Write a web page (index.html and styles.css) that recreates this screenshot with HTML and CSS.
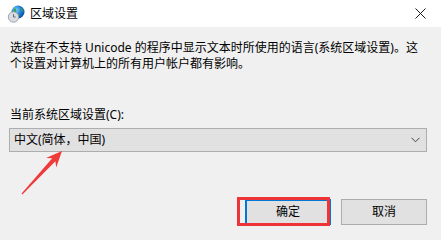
FILE: index.html
```html
<!DOCTYPE html>
<html lang="zh-CN">
<head>
<meta charset="utf-8">
<title>区域设置</title>
<link rel="stylesheet" href="styles.css">
</head>
<body>
<div class="window">
  <div class="titlebar">
    <svg class="app-icon" width="18" height="18" viewBox="0 0 18 18">
      <defs>
        <radialGradient id="g" cx="0.35" cy="0.35" r="0.7">
          <stop offset="0" stop-color="#7fd0ff"/>
          <stop offset="0.6" stop-color="#1a7ad4"/>
          <stop offset="1" stop-color="#0b4f9a"/>
        </radialGradient>
      </defs>
      <circle cx="11" cy="7" r="6.5" fill="url(#g)"/>
      <path d="M7 3.5 C9 3 10 5 9 6.5 C8 8 10 9.5 12 9 C13 10 12 12 10.5 12.5 C9 11 7 10 6 8 Z" fill="#3aa54a"/>
      <path d="M13.5 2.5 C15 3.5 16.5 5 16.5 7 C15 6.5 14 5 13.5 2.5 Z" fill="#3aa54a"/>
      <circle cx="6.5" cy="12" r="5.2" fill="#d9dde2" stroke="#8d96a0" stroke-width="0.8"/>
      <path d="M6.5 9.2 V12 H8.6" fill="none" stroke="#555e68" stroke-width="0.9"/>
    </svg>
    <span class="title">区域设置</span>
    <span class="close">
      <svg width="11" height="11" viewBox="0 0 11 11"><path d="M0.5 0.5 L10.5 10.5 M10.5 0.5 L0.5 10.5" stroke="#1a1a1a" stroke-width="1"/></svg>
    </span>
  </div>
  <div class="content">
    <p class="desc">选择在不支持 Unicode 的程序中显示文本时所使用的语言(系统区域设置)。这个设置对计算机上的所有用户帐户都有影响。</p>
    <div class="label">当前系统区域设置(C):</div>
    <div class="select">
      <span class="select-text">中文(简体，中国)</span>
      <svg class="chev" width="9" height="6" viewBox="0 0 9 6"><path d="M0.5 0.8 L4.5 4.8 L8.5 0.8" fill="none" stroke="#444" stroke-width="1"/></svg>
    </div>
    <div class="buttons">
      <div class="btn btn-default">确定</div>
      <div class="btn">取消</div>
    </div>
  </div>
  <div class="highlight"></div>
  <svg class="arrow" width="441" height="238" viewBox="0 0 441 238">
    <polygon points="62,151 56.2,167.5 55.4,161.3 22.4,194.4 21.6,193.6 52.2,158.3 46,158" fill="#ef3a3a"/>
  </svg>
</div>
</body>
</html>
```
FILE: styles.css
```css
html, body {
  margin: 0;
  padding: 0;
}
body {
  width: 441px;
  height: 238px;
  overflow: hidden;
  font-family: "Noto Sans", "Noto Sans CJK SC", sans-serif;
  font-size: 12px;
  color: #000;
  background: #f0f0f0;
}
.window {
  position: relative;
  width: 441px;
  height: 238px;
  display: flex;
  flex-direction: column;
}
.titlebar {
  height: 27px;
  background: #fff;
  display: flex;
  align-items: center;
  padding-left: 7px;
  gap: 5px;
}
.app-icon {
  flex: none;
}
.title {
  font-size: 12px;
  line-height: 16px;
  flex: 1;
}
.close {
  width: 34px;
  display: flex;
  justify-content: center;
  padding-right: 4px;
}
.content {
  flex: 1;
  background: #f0f0f0;
  padding: 0 14px 0 10px;
  display: flex;
  flex-direction: column;
}
.desc {
  margin: 13px 0 0 0;
  line-height: 16px;
}
.label {
  margin-top: 35px;
  line-height: 16px;
}
.select {
  margin: 5px 0 0 -1px;
  height: 22px;
  border: 1px solid #adadad;
  background: #e1e1e1;
  display: flex;
  align-items: center;
  justify-content: space-between;
  padding: 0 5px 0 4px;
}
.select-text {
  line-height: 16px;
}
.chev {
  margin-right: 1px;
}
.buttons {
  margin-top: 47px;
  display: flex;
  justify-content: flex-end;
  gap: 10px;
}
.btn {
  width: 84px;
  height: 24px;
  border: 1px solid #adadad;
  background: #e1e1e1;
  display: flex;
  align-items: center;
  justify-content: center;
  line-height: 16px;
}
.btn-default {
  border: 2px solid #0078d7;
  width: 82px;
  height: 22px;
}
.highlight {
  position: absolute;
  left: 237px;
  top: 197px;
  width: 87px;
  height: 23px;
  border: 3px solid #ee3438;
}
.arrow {
  position: absolute;
  left: 0;
  top: 0;
  pointer-events: none;
}
```
